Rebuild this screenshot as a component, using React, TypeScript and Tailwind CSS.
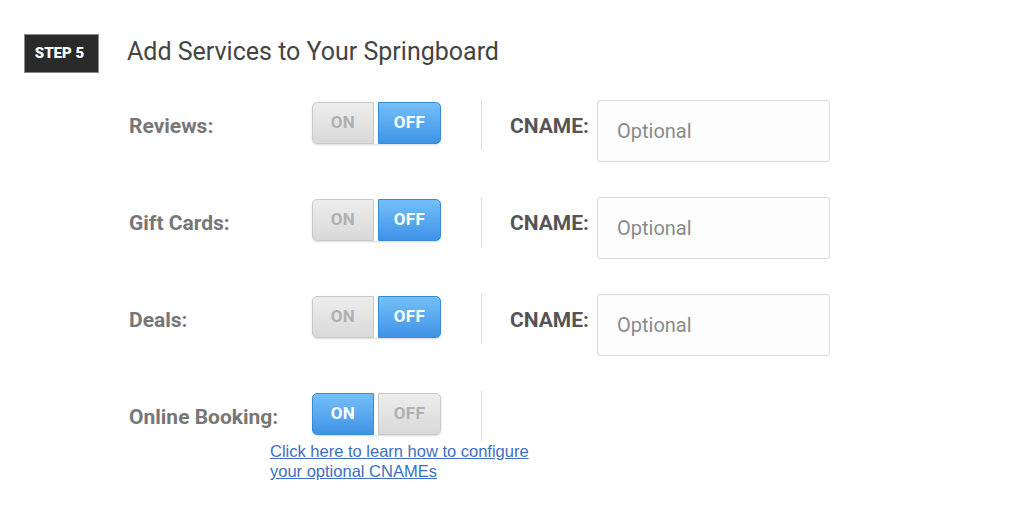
import React from "react";

type Service = {
  label: string;
  on: boolean;
  cname: boolean;
};

const services: Service[] = [
  { label: "Reviews:", on: false, cname: true },
  { label: "Gift Cards:", on: false, cname: true },
  { label: "Deals:", on: false, cname: true },
  { label: "Online Booking:", on: true, cname: false },
];

const activeBtn =
  "bg-gradient-to-b from-[#74bff9] to-[#3f93e6] border border-[#3a8ad8] text-white";
const idleBtn =
  "bg-gradient-to-b from-[#ededed] to-[#d9d9d9] border border-[#c9c9c9] text-[#b0b0b0]";

const Toggle = ({ on }: { on: boolean }) => (
  <div className="flex gap-[4px] shadow-[0_1px_2px_rgba(0,0,0,0.15)] rounded-[5px]">
    <button
      className={`w-[62px] h-[42px] rounded-l-[5px] text-[17px] font-bold tracking-wide ${
        on ? activeBtn : idleBtn
      }`}
    >
      ON
    </button>
    <button
      className={`w-[63px] h-[42px] rounded-r-[5px] text-[17px] font-bold tracking-wide ${
        on ? idleBtn : activeBtn
      }`}
    >
      OFF
    </button>
  </div>
);

const App = () => {
  return (
    <div
      className="w-[1024px] h-[518px] bg-white overflow-hidden"
      style={{ fontFamily: "Roboto, 'Liberation Sans', sans-serif" }}
    >
      {/* header */}
      <div className="flex items-center pt-[34px] pl-[24px]">
        <div className="w-[75px] h-[39px] bg-[#2a2a2a] border border-[#8a8a8a] flex items-center justify-center text-white text-[15px] font-black pr-[4px]">
          STEP 5
        </div>
        <h1 className="ml-[28px] text-[25px] text-[#444] leading-none -mt-[5px]">
          Add Services to Your Springboard
        </h1>
      </div>

      {/* service rows */}
      <div className="pl-[129px] mt-[27px] flex flex-col">
        {services.map((s) => (
          <div key={s.label} className="flex items-start h-[97px]">
            <div className="w-[183px] mt-[13px] text-[21px] leading-[26px] font-bold text-[#777]">
              {s.label}
            </div>
            <div className="w-[169px] mt-[2px] flex items-center">
              <Toggle on={s.on} />
            </div>
            <div className="w-px h-[50px] bg-[#dcdcdc]" />
            {s.cname && (
              <div className="flex items-start">
                <span className="ml-[28px] w-[87px] mt-[13px] text-[21px] leading-[26px] font-bold text-[#555]">
                  CNAME:
                </span>
                <input
                  placeholder="Optional"
                  className="w-[233px] h-[62px] px-[19px] border border-[#dadada] rounded-[3px] bg-[#fdfdfd] text-[20px] placeholder:text-[#8a8a8a] outline-none"
                />
              </div>
            )}
          </div>
        ))}
        <a
          href="#"
          className="-mt-[47px] ml-[141px] block w-[280px] text-[16.5px] leading-[20px] text-[#3d6fc4] underline"
          style={{ fontFamily: "'Liberation Sans', Arial, sans-serif" }}
        >
          Click here to learn how to configure your optional CNAMEs
        </a>
      </div>
    </div>
  );
};

export default App;
